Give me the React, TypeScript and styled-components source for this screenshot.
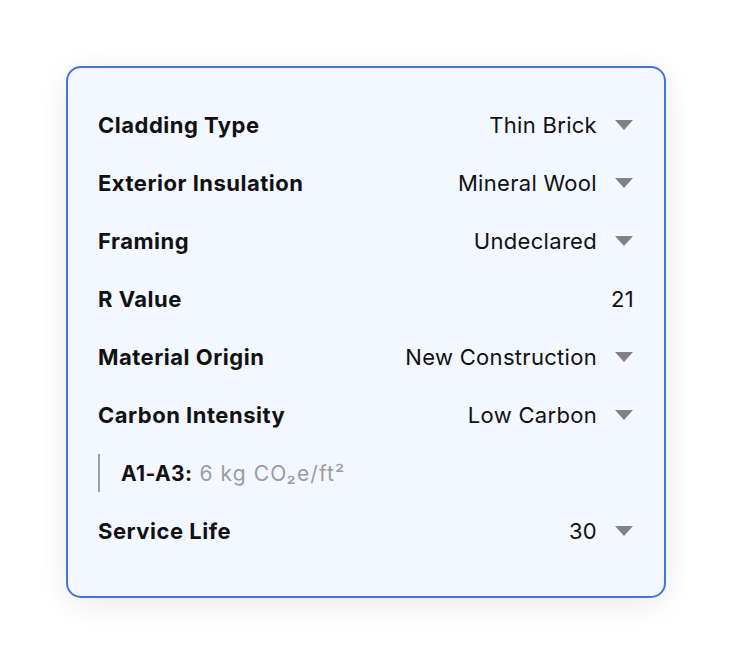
import React, { FC } from "react";
import styled, { createGlobalStyle } from "styled-components";

const GlobalStyle = createGlobalStyle`
  body {
    margin: 0;
    background: #ffffff;
    font-family: "Inter", "Liberation Sans", sans-serif;
  }
`;

interface Field {
  label: string;
  value: string;
  dropdown: boolean;
}

const fields: Field[] = [
  { label: "Cladding Type", value: "Thin Brick", dropdown: true },
  { label: "Exterior Insulation", value: "Mineral Wool", dropdown: true },
  { label: "Framing", value: "Undeclared", dropdown: true },
  { label: "R Value", value: "21", dropdown: false },
  { label: "Material Origin", value: "New Construction", dropdown: true },
  { label: "Carbon Intensity", value: "Low Carbon", dropdown: true },
];

const Page = styled.div`
  padding: 66px;
`;

const Card = styled.div`
  box-sizing: border-box;
  width: 600px;
  height: 532px;
  padding: 28px 30px 36px 30px;
  background: #f3f7ff;
  border: 2px solid #4474dc;
  border-radius: 15px;
  box-shadow: 0 6px 34px rgba(0, 0, 0, 0.09);
  display: flex;
  flex-direction: column;
`;

const Row = styled.div`
  display: flex;
  align-items: center;
  justify-content: space-between;
  height: 58px;
  font-size: 22px;
  color: #111111;
`;

const Label = styled.div`
  font-weight: 700;
  letter-spacing: 0.5px;
`;

const Value = styled.div`
  display: flex;
  align-items: center;
  gap: 18px;
  font-weight: 400;
  letter-spacing: 0.3px;
`;

const Caret = styled.span`
  width: 0;
  height: 0;
  border-left: 9px solid transparent;
  border-right: 9px solid transparent;
  border-top: 10px solid #828282;
  margin-right: 1px;
`;

const SubRow = styled.div`
  display: flex;
  align-items: center;
  height: 58px;
`;

const SubBox = styled.div`
  display: flex;
  align-items: center;
  height: 38px;
  border-left: 2px solid #a0a0a0;
  padding-left: 21px;
  font-size: 21px;
  letter-spacing: 0.4px;
`;

const SubLabel = styled.span`
  font-weight: 700;
  color: #111111;
  margin-right: 7px;
`;

const SubValue = styled.span`
  color: #9c9c9c;
  letter-spacing: 1.1px;
`;

const FieldRow: FC<{ field: Field }> = ({ field }) => (
  <Row>
    <Label>{field.label}</Label>
    <Value>
      <span>{field.value}</span>
      {field.dropdown && <Caret />}
    </Value>
  </Row>
);

const App: FC = () => {
  return (
    <Page>
      <GlobalStyle />
      <Card>
        {fields.map((f) => (
          <FieldRow key={f.label} field={f} />
        ))}
        <SubRow>
          <SubBox>
            <SubLabel>A1-A3:</SubLabel>
            <SubValue>6 kg CO₂e/ft²</SubValue>
          </SubBox>
        </SubRow>
        <FieldRow field={{ label: "Service Life", value: "30", dropdown: true }} />
      </Card>
    </Page>
  );
};

export default App;
